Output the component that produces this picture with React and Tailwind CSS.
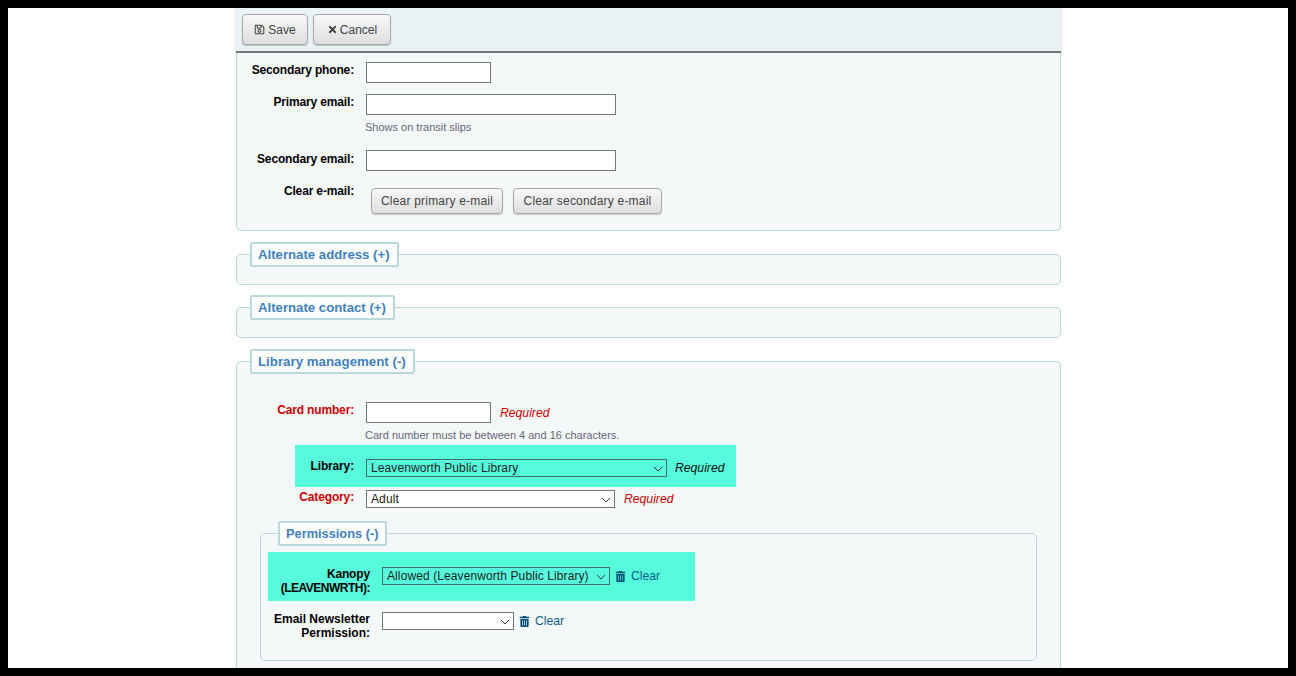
import React from 'react';
import { FaRegSave, FaTimes, FaTrashAlt } from 'react-icons/fa';

const Button = ({ className = '', children }) => (
  <button className={`flex items-center justify-center rounded-[4px] border border-[#a8a8a8] bg-gradient-to-b from-[#f8f8f8] to-[#dedede] text-[12px] text-[#444] shadow-[0_1px_1px_rgba(0,0,0,0.2)] ${className}`}>
    {children}
  </button>
);

const Label = ({ className = 'w-[117px]', red, children }) => (
  <label className={`shrink-0 pt-px text-right text-[12px] leading-[14px] font-bold tracking-[-0.15px] ${red ? 'text-[#cc0000]' : 'text-black'} ${className}`}>
    {children}
  </label>
);

const Input = ({ className }) => (
  <input className={`h-[21px] border border-[#767676] bg-white ${className}`} />
);

const Select = ({ className, border = 'border-[#767676]', children }) => (
  <div className={`relative h-[18px] ${className}`}>
    <select className={`block h-full w-full appearance-none border bg-transparent pl-1 text-[12px] leading-[14px] tracking-[0.1px] text-[#222] ${border}`}>
      {children}
    </select>
    <svg className="pointer-events-none absolute top-[7px] right-[4px] h-[6px] w-[10px]" viewBox="0 0 10 6" fill="none" stroke="#333" strokeWidth="1">
      <path d="M1 1l4 4 4-4" />
    </svg>
  </div>
);

const Hint = ({ children }) => (
  <div className="ml-[128px] text-[11px] leading-[14px] text-[#667]">{children}</div>
);

const Required = ({ className = 'text-[#cc0000]', children = 'Required' }) => (
  <div className={`text-[12.2px] italic leading-[18px] ${className}`}>{children}</div>
);

const Clear = () => (
  <a className="ml-[5px] flex items-center gap-[5px] text-[12.2px] leading-[18px] text-[#0b5e8a]">
    <FaTrashAlt className="h-[11px] w-[11px] text-[#004d73]" />
    Clear
  </a>
);

const Legend = ({ className = 'ml-[13px] text-[13.2px]', children }) => (
  <legend className={`h-[25px] rounded-[2px] border-2 border-[#b9d9da] bg-white pr-[7px] pl-[6px] leading-[21px] font-bold text-[#3f7fbe] ${className}`}>
    {children}
  </legend>
);

const App = () => {
  return (
    <div className="h-[676px] overflow-hidden bg-black p-2 font-['Liberation_Sans',Arial,sans-serif]">
      <div className="h-full overflow-hidden bg-white">
        <div className="ml-[228px] w-[825px]">
          {/* Toolbar */}
          <div className="flex h-[45px] items-start gap-[5px] border-b-2 border-[#757575] bg-[#e9f2f5] pt-[6px] pl-[6px] shadow-[0_1px_2px_rgba(0,0,0,0.25)]">
            <Button className="h-[31px] w-[66px] gap-[3px]">
              <FaRegSave className="h-[11px] w-[11px]" /> Save
            </Button>
            <Button className="h-[31px] w-[78px] gap-[2px]">
              <FaTimes className="h-[11px] w-[11px]" /> Cancel
            </Button>
          </div>

          {/* Contact */}
          <div className="h-[178px] rounded-b-[5px] border-x border-b border-[#b9d9da] bg-[#f4f8f9] pt-[9px]">
            <div className="flex gap-3">
              <Label>Secondary phone:</Label>
              <Input className="w-[125px]" />
            </div>
            <div className="mt-[11px] flex gap-3">
              <Label>Primary email:</Label>
              <Input className="w-[250px]" />
            </div>
            <div className="mt-[5px]"><Hint>Shows on transit slips</Hint></div>
            <div className="mt-[16px] flex gap-3">
              <Label className="mt-px w-[117px]">Secondary email:</Label>
              <Input className="w-[250px]" />
            </div>
            <div className="mt-[11px] flex gap-3">
              <Label className="mt-px w-[117px]">Clear e-mail:</Label>
              <div className="mt-[6px] ml-[5px] flex gap-[10px]">
                <Button className="h-[26px] w-[132px] tracking-[0.2px]">Clear primary e-mail</Button>
                <Button className="h-[26px] w-[149px] tracking-[0.2px]">Clear secondary e-mail</Button>
              </div>
            </div>
          </div>

          <fieldset className="mt-[11px] h-[43px] rounded-[5px] border border-[#b9d9da] bg-[#f4f8f9]">
            <Legend>Alternate address (+)</Legend>
          </fieldset>

          <fieldset className="mt-[10px] h-[43px] rounded-[5px] border border-[#b9d9da] bg-[#f4f8f9]">
            <Legend>Alternate contact (+)</Legend>
          </fieldset>

          {/* Library management */}
          <fieldset className="mt-[11px] rounded-[5px] border border-[#b9d9da] bg-[#f4f8f9] pb-[40px]">
            <Legend className="ml-[13px] text-[13.3px]">Library management (-)</Legend>

            <div className="mt-[28px] flex gap-3">
              <Label red>Card number:</Label>
              <Input className="w-[125px]" />
              <div className="ml-[-3px] pt-[2px]"><Required /></div>
            </div>
            <div className="mt-[5px]"><Hint>Card number must be between 4 and 16 characters.</Hint></div>

            <div className="mt-[3px] ml-[58px] flex h-[42px] w-[441px] items-start gap-3 bg-[#56fbdc] pt-[14px]">
              <Label className="-mt-px w-[59px]">Library:</Label>
              <Select className="w-[301px]" border="border-[#3f6f66]">
                <option>Leavenworth Public Library</option>
              </Select>
              <div className="ml-[-4px]"><Required className="text-[#111]" /></div>
            </div>

            <div className="mt-[3px] flex gap-3">
              <Label red className="-mt-px w-[117px]">Category:</Label>
              <Select className="w-[249px] bg-white">
                <option>Adult</option>
              </Select>
              <div className="ml-[-3px]"><Required /></div>
            </div>

            {/* Permissions */}
            <fieldset className="mx-[23px] mt-[13px] h-[140px] rounded-[5px] border border-[#b9d9da] bg-[#f4f8f9]">
              <Legend className="ml-[17px] text-[12.8px]">Permissions (-)</Legend>

              <div className="mt-[6px] ml-[7px] flex h-[49px] w-[427px] items-start gap-3 bg-[#56fbdc] pt-[15px]">
                <Label className="-mt-px w-[102px]">
                  Kanopy <span className="tracking-[-0.5px]">(LEAVENWRTH):</span>
                </Label>
                <div className="flex items-center">
                  <Select className="w-[228px]" border="border-[#3f6f66]">
                    <option>Allowed (Leavenworth Public Library)</option>
                  </Select>
                  <Clear />
                </div>
              </div>

              <div className="mt-[11px] ml-[7px] flex items-start gap-3">
                <Label className="-mt-px w-[102px] tracking-normal">Email Newsletter Permission:</Label>
                <div className="flex items-center">
                  <Select className="w-[132px] bg-white">
                    <option></option>
                  </Select>
                  <Clear />
                </div>
              </div>
            </fieldset>
          </fieldset>
        </div>
      </div>
    </div>
  );
};

export default App;
